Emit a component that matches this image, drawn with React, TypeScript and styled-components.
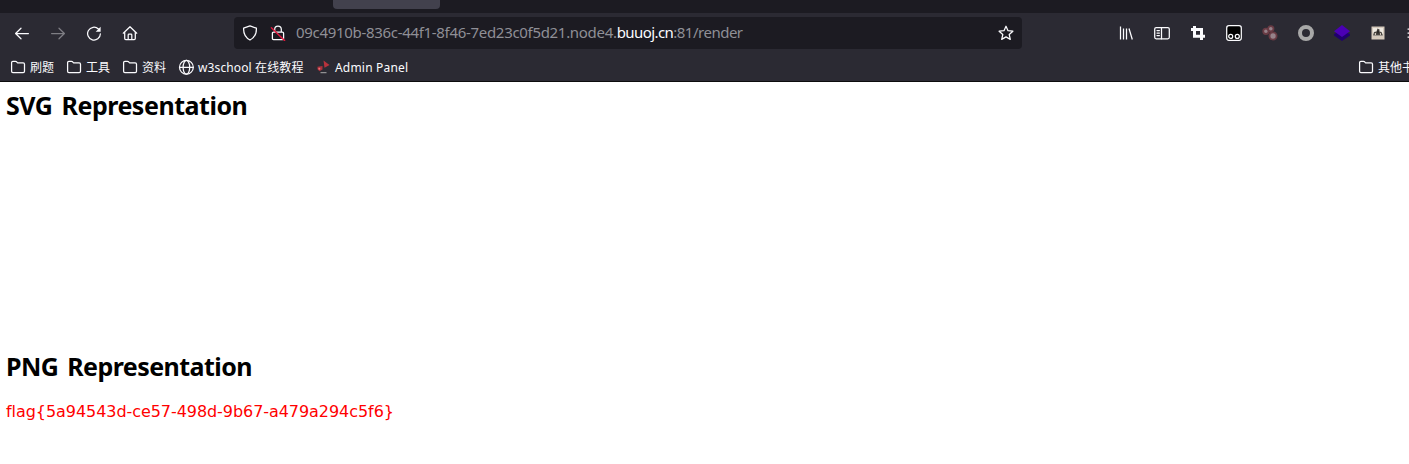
import React from "react";
import styled, { createGlobalStyle } from "styled-components";

const GlobalStyle = createGlobalStyle`
  * { box-sizing: border-box; }
  html, body { margin: 0; padding: 0; background: #fff; overflow: hidden; }
`;

const Window = styled.div`
  width: 1409px;
  height: 464px;
  overflow: hidden;
  display: flex;
  flex-direction: column;
  font-family: "Noto Sans", "Noto Sans CJK SC", sans-serif;
`;

const TabStrip = styled.div`
  height: 13px;
  flex: none;
  background: #1c1b22;
  padding-left: 333px;
`;

const Tab = styled.div`
  width: 107px;
  height: 9px;
  background: #42414d;
  border-radius: 0 0 4px 4px;
`;

const NavBar = styled.div`
  height: 40px;
  flex: none;
  background: #2b2a33;
  display: flex;
  align-items: center;
  padding-left: 4px;
`;

const ToolButton = styled.button<{ $dim?: boolean }>`
  width: 36px;
  height: 32px;
  flex: none;
  padding: 0;
  border: 0;
  background: none;
  color: #fbfbfe;
  opacity: ${(p) => (p.$dim ? 0.4 : 1)};
  display: flex;
  align-items: center;
  justify-content: center;
`;

const UrlBar = styled.div`
  width: 788px;
  height: 32px;
  flex: none;
  margin-left: 86px;
  border-radius: 4px;
  background: #1c1b22;
  color: #fbfbfe;
  display: flex;
  align-items: center;
  padding: 0 8px;
`;

const Address = styled.div`
  flex: 1;
  margin-left: 10px;
  padding-bottom: 2px;
  font-size: 15px;
  letter-spacing: -0.31px;
  line-height: 20px;
  white-space: nowrap;
  color: #8f8f96;
`;

const Host = styled.span`
  letter-spacing: -0.57px;
  color: #fbfbfe;
`;

const Path = styled.span`
  letter-spacing: -0.5px;
`;

const SiteIcons = styled.div`
  display: flex;
  gap: 12px;
`;

const Extensions = styled.div`
  display: flex;
  margin-left: 86px;
`;

const BookmarksBar = styled.div`
  height: 29px;
  flex: none;
  background: #2b2a33;
  border-bottom: 1px solid #0c0c0d;
  color: #fbfbfe;
  display: flex;
  align-items: center;
  padding-left: 10px;
`;

const Bookmark = styled.div<{ $width: number }>`
  width: ${(p) => p.$width}px;
  flex: none;
  display: flex;
  align-items: center;
  gap: 4px;
  font-size: 12px;
  line-height: 18px;
  white-space: nowrap;
`;

const Label = styled.span<{ $spacing?: number }>`
  padding-top: 2px;
  letter-spacing: ${(p) => p.$spacing ?? 0}px;
`;

const OtherBookmarks = styled(Bookmark)`
  margin-left: auto;
`;

const Page = styled.main`
  flex: 1;
  background: #fff;
  padding: 5px 6px 0;
`;

const Heading = styled.h2<{ $spacing: number }>`
  margin: 0;
  height: 36px;
  font-size: 25px;
  line-height: 36px;
  font-weight: 700;
  letter-spacing: ${(p) => p.$spacing}px;
  word-spacing: 3px;
  color: #000;
`;

const Canvas = styled.div`
  height: 225px;
`;

const Flag = styled.p`
  margin: 18px 0 0;
  font-family: "DejaVu Sans", sans-serif;
  font-size: 16px;
  line-height: 20px;
  letter-spacing: -0.06px;
  color: #f00;
`;

const Glyph = styled.svg`
  flex: none;
`;

const Icon = ({ children }: { children: React.ReactNode }) => (
  <Glyph
    width={16}
    height={16}
    viewBox="0 0 16 16"
    fill="none"
    stroke="currentColor"
    strokeWidth="1.25"
    strokeLinecap="round"
    strokeLinejoin="round"
  >
    {children}
  </Glyph>
);

const FolderIcon = () => (
  <Icon>
    <path d="M1.6 12.2V3.6c0-.8.5-1.3 1.3-1.3h2.6c.5 0 .8.2 1.1.5l1 1.1h5.6c.8 0 1.3.5 1.3 1.3v7c0 .8-.5 1.3-1.3 1.3H2.9c-.8 0-1.3-.5-1.3-1.3Z" />
  </Icon>
);

const GlobeIcon = () => (
  <Icon>
    <circle cx="8.4" cy="8.3" r="6.9" />
    <ellipse cx="8.4" cy="8.3" rx="3.3" ry="6.9" />
    <path d="M1.6 8.3h13.6" />
  </Icon>
);

const AdminIcon = () => (
  <Icon>
    <g stroke="none">
      <path d="M8.5 1.5 14.5 6l-5 2.8Z" fill="#b8323c" />
      <path d="M2.5 7.7 7.5 7v3.5L4.5 12.2l-2-2Z" fill="#a8323c" />
      <circle cx="4.3" cy="9.7" r="1" fill="#ef6d74" />
      <path d="M5.500 13.200h6v1h-6z" fill="#aaa" />
    </g>
  </Icon>
);

export default function App() {
  return (
    <Window>
      <GlobalStyle />
      <TabStrip>
        <Tab />
      </TabStrip>
      <NavBar>
        <ToolButton aria-label="Back">
          <Icon><path d="M14.4 8.5H1.8M7 3.2 1.6 8.5 7 13.8" /></Icon>
        </ToolButton>
        <ToolButton aria-label="Forward" $dim>
          <Icon><path d="M1.6 8.5h12.600M9 3.2 14.400 8.500 9 13.800" /></Icon>
        </ToolButton>
        <ToolButton aria-label="Reload">
          <Icon>
            <path d="M12.400 4A6.400 6.400 0 1 0 14.400 8.800" />
            <path d="M14.600 1.800v5H9.700Z" fill="currentColor" stroke="none" />
          </Icon>
        </ToolButton>
        <ToolButton aria-label="Home">
          <Icon>
            <path d="M1.300 8.200 8 1.700l6.700 6.500M2.700 7.300v6.200c0 .7.400 1.100 1.100 1.100h8.400c.7 0 1.100-.4 1.100-1.100V7.300M6.200 14.400V10c0-.5.300-.8.8-.8h2c.5 0 .8.300.8.800v4.400" />
          </Icon>
        </ToolButton>
        <UrlBar>
          <SiteIcons>
            <Icon>
              <path d="M8 .9 14.400 3.200c.2 5-1.300 9.100-6.400 11.800C2.900 12.300 1.400 8.200 1.600 3.200Z" />
            </Icon>
            <Icon>
              <path d="M4.700 7V4.300a3.300 3.300 0 0 1 6.600 0V7M3.500 7.200h9c.7 0 1.100.4 1.100 1.100v5.200c0 .7-.4 1.100-1.100 1.100h-9c-.7 0-1.100-.4-1.100-1.100V8.300c0-.7.400-1.100 1.100-1.100Z" />
              <path d="M1.400 2.700 14.600 15.600" stroke="#e2193f" strokeWidth="1.400" />
            </Icon>
          </SiteIcons>
          <Address>
            09c4910b-836c-44f1-8f46-7ed23c0f5d21.node4.<Host>buuoj.cn</Host>
            <Path>:81/render</Path>
          </Address>
          <Icon>
            <path d="m8 1.200 2 4.500 4.900.5-3.700 3.300 1.100 4.900L8 11.900l-4.300 2.500 1.100-4.900L1.100 6.200 6 5.700Z" />
          </Icon>
        </UrlBar>
        <Extensions>
          <ToolButton aria-label="Library">
            <Icon>
              <path d="M2.500 1.500v13M5.500 3.500v11M8.500 3.500v11M11 3.500l3.300 11" strokeLinecap="butt" />
            </Icon>
          </ToolButton>
          <ToolButton aria-label="Sidebar">
            <Icon>
              <rect x=".7" y="2.500" width="14.600" height="11.300" rx="1.500" />
              <path d="M7.500 2.500v11.300M3 5.500h2.400M3 8h2.400M3 10.500h2.400" />
            </Icon>
          </ToolButton>
          <ToolButton aria-label="Crop">
            <Icon>
              <g strokeWidth="3" strokeLinecap="butt" strokeLinejoin="miter">
                <path d="M4.500 1v10.300H15M1 4.500h10.500V15" />
              </g>
            </Icon>
          </ToolButton>
          <ToolButton aria-label="Tampermonkey">
            <Icon>
              <rect x=".7" y=".7" width="14.600" height="14.600" rx="2.200" fill="#000" />
              <circle cx="4.700" cy="11.400" r="2" />
              <circle cx="11.300" cy="11.400" r="2" />
            </Icon>
          </ToolButton>
          <ToolButton aria-label="Cookies">
            <Icon>
              <g fill="#96828a" stroke="#693b44" strokeWidth="1.800">
                <circle cx="3.900" cy="6.300" r="2.700" />
                <circle cx="8.800" cy="3.800" r="2.700" />
                <circle cx="11" cy="11" r="3.600" />
              </g>
            </Icon>
          </ToolButton>
          <ToolButton aria-label="Proxy">
            <Icon><circle cx="8" cy="8" r="6" stroke="#a8a8a8" strokeWidth="4" /></Icon>
          </ToolButton>
          <ToolButton aria-label="Layers">
            <Icon>
              <g stroke="none">
                <path d="M0 9 8 5l8 4v1.500L8 16 0 10.500Z" fill="#20006e" />
                <path d="m8 0 8 6.200L8 12 0 6.200Z" fill="#4b00b5" />
              </g>
            </Icon>
          </ToolButton>
          <ToolButton aria-label="Hack tools">
            <Icon>
              <g stroke="none">
                <path d="M1.500 1.500h13v13h-13z" fill="#d6cabd" />
                <path d="M3 3h10v8H3z" fill="#eee9e0" />
                <path d="m7.500 3.500 2 1v2l2 .5 1.500 3.500H3L4 7l2.500-.5Z" fill="#4a4540" />
                <path d="M7.500 5.500h1v3h-1z" fill="#111" />
                <path d="M4.800 8h1.200v2H4.800zM10 8h1v2h-1z" fill="#cfc6ba" />
              </g>
            </Icon>
          </ToolButton>
          <ToolButton aria-label="Menu">
            <Icon><path d="M2 4h12M2 8h12M2 12h12" /></Icon>
          </ToolButton>
        </Extensions>
      </NavBar>
      <BookmarksBar>
        <Bookmark $width={56}><FolderIcon /><Label>刷题</Label></Bookmark>
        <Bookmark $width={56}><FolderIcon /><Label>工具</Label></Bookmark>
        <Bookmark $width={56}><FolderIcon /><Label>资料</Label></Bookmark>
        <Bookmark $width={137}><GlobeIcon /><Label $spacing={0.12}>w3school 在线教程</Label></Bookmark>
        <Bookmark $width={100}><AdminIcon /><Label $spacing={0.2}>Admin Panel</Label></Bookmark>
        <OtherBookmarks $width={51}><FolderIcon /><Label>其他书签</Label></OtherBookmarks>
      </BookmarksBar>
      <Page>
        <Heading $spacing={-0.47}>SVG Representation</Heading>
        <Canvas />
        <Heading $spacing={-0.55}>PNG Representation</Heading>
        <Flag>{"flag{5a94543d-ce57-498d-9b67-a479a294c5f6}"}</Flag>
      </Page>
    </Window>
  );
}
